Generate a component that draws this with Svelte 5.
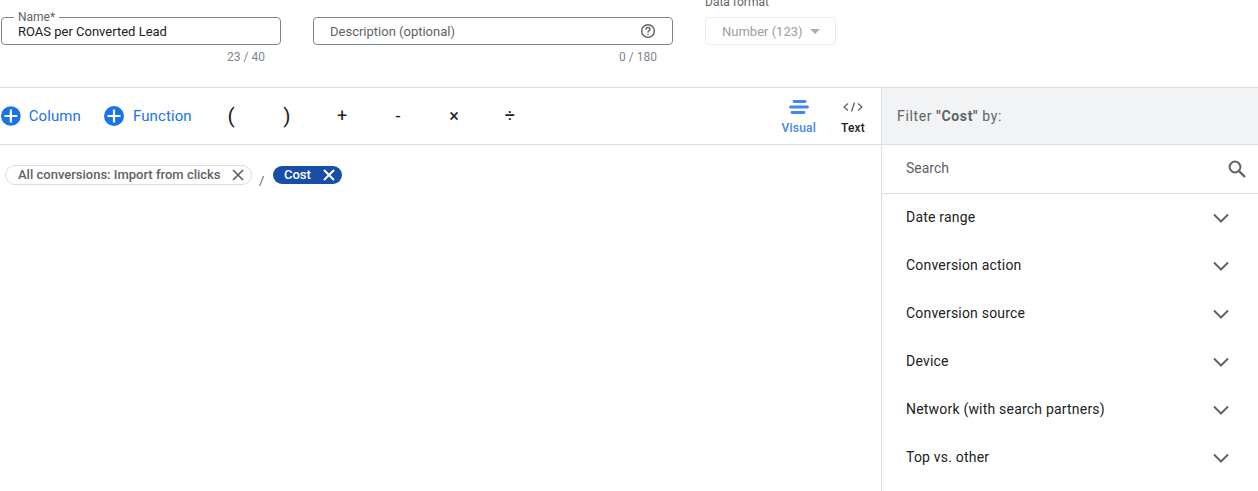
<script>
  const ops = ["(", ")", "+", "-", "×", "÷"];
  const filters = ["Date range", "Conversion action", "Conversion source", "Device", "Network (with search partners)", "Top vs. other"];
</script>

<div class="page">
  <section class="fields">
    <div class="field name-field">
      <div class="box">
        <span class="float-label">Name*</span>
        <span class="value">ROAS per Converted Lead</span>
      </div>
      <div class="count">23 / 40</div>
    </div>
    <div class="field desc-field">
      <div class="box">
        <span class="placeholder">Description (optional)</span>
        <svg class="help" viewBox="0 0 24 24" width="16" height="16" fill="none" aria-hidden="true">
          <circle cx="12" cy="12" r="9.5" stroke="#5f6368" stroke-width="2.2" />
          <path d="M9 9.6a3 3 0 0 1 6 0c0 2-3 2.2-3 4.6" stroke="#5f6368" stroke-width="2.2" />
          <path d="M11 16h2v2h-2z" fill="#5f6368" />
        </svg>
      </div>
      <div class="count">0 / 180</div>
    </div>
    <div class="format-field">
      <div class="format-label">Data format</div>
      <div class="format-select">
        <span>Number (123)</span>
        <i class="caret"></i>
      </div>
    </div>
  </section>

  <section class="editor">
    <div class="main">
      <div class="toolbar">
        <button class="add add-column">
          <svg viewBox="0 0 20 20" width="20" height="20" aria-hidden="true">
            <circle cx="10" cy="10" r="10" fill="#1a73e8" />
            <path d="M10 3.5v13M3.5 10h13" stroke="#fff" stroke-width="2.2" />
          </svg>
          Column
        </button>
        <button class="add add-function">
          <svg viewBox="0 0 20 20" width="20" height="20" aria-hidden="true">
            <circle cx="10" cy="10" r="10" fill="#1a73e8" />
            <path d="M10 3.5v13M3.5 10h13" stroke="#fff" stroke-width="2.2" />
          </svg>
          Function
        </button>
        <div class="ops">
          {#each ops as op, i (i)}
            <span class="op" class:paren={i < 2}>{op}</span>
          {/each}
        </div>
        <div class="modes">
          <div class="mode visual">
            <svg viewBox="0 0 20 14" width="20" height="14" aria-hidden="true">
              <path d="M5 1.5h11M1.5 7h17M3 12.5h12" stroke="#4285f4" stroke-width="2.8" stroke-linecap="round" />
            </svg>
            <span>Visual</span>
          </div>
          <div class="mode text">
            <svg viewBox="0 0 20 14" width="20" height="14" fill="none" aria-hidden="true">
              <path d="M5 3.5 1 7l4 3.5M15 3.5 19 7l-4 3.5M11.5 2.5l-3 9" stroke="#5f6368" stroke-width="1.3" />
            </svg>
            <span>Text</span>
          </div>
        </div>
      </div>
      <div class="formula">
        <span class="chip outline">
          All conversions: Import from clicks
          <svg viewBox="0 0 12 12" width="12" height="12" aria-hidden="true"><path d="M1 1l10 10M11 1 1 11" stroke="#5f6368" stroke-width="1.7" /></svg>
        </span>
        <span class="slash">/</span>
        <span class="chip filled">
          Cost
          <svg viewBox="0 0 12 12" width="12" height="12" aria-hidden="true"><path d="M1 1l10 10M11 1 1 11" stroke="#fff" stroke-width="2" /></svg>
        </span>
      </div>
    </div>

    <aside class="panel">
      <div class="panel-head"><span>Filter <b>"Cost"</b> by:</span></div>
      <div class="search">
        <span>Search</span>
        <svg viewBox="0 0 18 18" width="18" height="18" fill="none" aria-hidden="true">
          <circle cx="7" cy="7" r="5.4" stroke="#5f6368" stroke-width="2" />
          <path d="M11 11l6 6" stroke="#5f6368" stroke-width="2.4" />
        </svg>
      </div>
      {#each filters as filter (filter)}
        <div class="filter-row">
          <span>{filter}</span>
          <svg viewBox="0 0 16 10" width="16" height="10" fill="none" aria-hidden="true">
            <path d="M1 1.5l7 7 7-7" stroke="#5f6368" stroke-width="2" />
          </svg>
        </div>
      {/each}
    </aside>
  </section>
</div>

<style>
  :global(body) {
    margin: 0;
    background: #fff;
    font-family: Roboto, "Liberation Sans", sans-serif;
  }
  .page {
    height: 491px;
    overflow: hidden;
    color: #202124;
  }
  .fields {
    display: flex;
    height: 88px;
    padding: 17px 0 0 1px;
    box-sizing: border-box;
    border-bottom: 1px solid #dadce0;
  }
  .field { display: flex; flex-direction: column; }
  .name-field { width: 280px; margin-right: 32px; }
  .desc-field { width: 360px; margin-right: 32px; }
  .box {
    position: relative;
    display: flex;
    align-items: center;
    justify-content: space-between;
    height: 28px;
    box-sizing: border-box;
    padding: 0 16px;
    border: 1px solid #80868b;
    border-radius: 4px;
    font-size: 13px;
  }
  .float-label {
    position: absolute;
    top: -8px;
    left: 12px;
    padding: 0 4px;
    background: #fff;
    color: #5f6368;
    font-size: 12px;
    line-height: 14px;
  }
  .value { color: #202124; }
  .placeholder { color: #5f6368; }
  .count {
    margin: 5px 16px 0 0;
    color: #80868b;
    font-size: 12px;
    line-height: 14px;
    text-align: right;
  }
  .format-field { margin-top: -22px; }
  .format-label {
    height: 22px;
    color: #5f6368;
    font-size: 12px;
    line-height: 14px;
  }
  .format-select {
    display: flex;
    align-items: center;
    width: 131px;
    height: 28px;
    box-sizing: border-box;
    padding-left: 16px;
    border: 1px solid #e8eaed;
    border-radius: 4px;
    color: #9aa0a6;
    font-size: 13px;
  }
  .caret {
    margin-left: 7px;
    border-top: 5px solid #a9adb1;
    border-left: 5px solid transparent;
    border-right: 5px solid transparent;
  }
  .editor { display: flex; height: 403px; }
  .main { flex: 1; min-width: 0; }
  .toolbar {
    display: flex;
    align-items: center;
    height: 57px;
    box-sizing: border-box;
    border-bottom: 1px solid #dadce0;
  }
  button.add {
    display: flex;
    align-items: center;
    flex: none;
    gap: 8px;
    padding: 0;
    border: 0;
    background: none;
    color: #1a73e8;
    font: 400 15px Roboto, sans-serif;
    letter-spacing: 0.1px;
  }
  .add-column { width: 80px; margin-left: 1px; }
  button.add-function { width: 99px; margin-left: 23px; gap: 9px; }
  .ops { display: flex; }
  .op {
    width: 56px;
    box-sizing: border-box;
    padding-right: 2px;
    color: #202124;
    font-size: 18px;
    line-height: 24px;
    text-align: center;
  }
  .op.paren { padding-right: 0; font-size: 21px; }
  .modes { display: flex; margin-left: auto; margin-right: 16px; gap: 25px; }
  .mode {
    display: flex;
    flex-direction: column;
    align-items: center;
    gap: 7px;
    margin-top: 3px;
    font-size: 12px;
    font-weight: 500;
    line-height: 14px;
    letter-spacing: 0.2px;
  }
  .mode.visual { color: #4285f4; }
  .mode.text { color: #202124; }
  .formula {
    display: flex;
    align-items: flex-start;
    padding: 20px 0 0 5px;
  }
  .chip {
    display: inline-flex;
    align-items: center;
    box-sizing: border-box;
    border-radius: 10px;
    font-size: 13px;
    font-weight: 500;
  }
  .chip.outline {
    gap: 11px;
    width: 247px;
    height: 20px;
    padding-left: 12px;
    padding-bottom: 1px;
    border: 1px solid #dadce0;
    color: #5f6368;
  }
  .chip.filled {
    gap: 12px;
    width: 69px;
    height: 18px;
    margin-top: 1px;
    padding-left: 11px;
    padding-bottom: 1px;
    background: #174ea6;
    color: #fff;
  }
  .slash {
    width: 21px;
    margin-top: 8px;
    padding-left: 7px;
    box-sizing: border-box;
    color: #5f6368;
    font-size: 13px;
  }
  .panel {
    width: 377px;
    box-sizing: border-box;
    border-left: 1px solid #dadce0;
  }
  .panel-head {
    display: flex;
    align-items: center;
    height: 57px;
    box-sizing: border-box;
    padding: 0 0 1px 15px;
    border-bottom: 1px solid #dadce0;
    background: #f1f3f4;
    color: #5f6368;
    font-size: 14px;
    letter-spacing: 0.65px;
  }
  .panel-head b { font-weight: 700; }
  .search {
    display: flex;
    align-items: center;
    justify-content: space-between;
    height: 49px;
    box-sizing: border-box;
    padding: 0 12px 1px 24px;
    border-bottom: 1px solid #dadce0;
    color: #5f6368;
    font-size: 14px;
  }
  .search span { margin-bottom: 2px; }
  .filter-row {
    display: flex;
    align-items: center;
    justify-content: space-between;
    height: 48px;
    padding: 0 29px 0 24px;
    color: #202124;
    font-size: 14px;
    letter-spacing: 0.2px;
  }
  .filter-row span { margin-bottom: 2px; }
</style>
